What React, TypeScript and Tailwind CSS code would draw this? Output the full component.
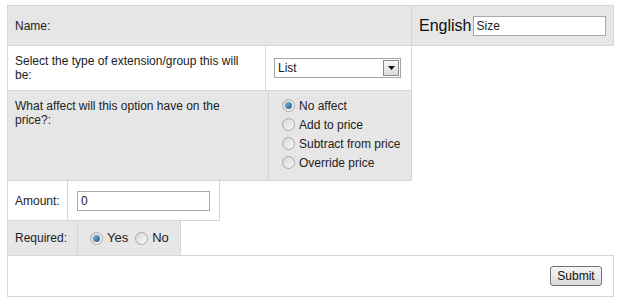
import React from 'react';

const font = { fontFamily: '"Liberation Sans", Arial, sans-serif' };

function Radio({ checked }: { checked?: boolean }) {
  return (
    <span className="relative inline-flex items-center justify-center w-[13px] h-[13px] rounded-full border border-[#a8a8a8] bg-gradient-to-br from-[#d6d6d6] to-[#fafafa] shrink-0">
      {checked ? (
        <span className="w-[7px] h-[7px] rounded-full bg-gradient-to-br from-[#7bb8dc] to-[#1d5e8c]" />
      ) : null}
    </span>
  );
}

function RadioRow({ label, checked }: { label: string; checked?: boolean }) {
  return (
    <label className="flex items-center gap-[4px] h-[19px]">
      <Radio checked={checked} />
      <span>{label}</span>
    </label>
  );
}

export default function App() {
  const cell = 'border-[#d6d6d6]';
  return (
    <div className="w-[619px] h-[305px] bg-white pl-[7px] pt-[5px] text-[12px] text-[#222]" style={font}>
      {/* Name row */}
      <div className="flex">
        <div className={`w-[405px] h-[41px] border ${cell} bg-[#e6e6e6] pl-[7px] flex items-center`}>Name:</div>
        <div className={`w-[202px] h-[41px] border-y border-r ${cell} bg-[#e6e6e6] pl-[7px] flex items-center gap-[2px]`}>
          <span className="text-[16px] text-[#111]">English</span>
          <input
            readOnly
            value="Size"
            className="w-[133px] h-[20px] border border-[#a9a9a9] bg-white px-[2px] text-[12px] outline-none"
            style={font}
          />
        </div>
      </div>

      {/* Type row */}
      <div className="flex">
        <div className={`w-[259px] h-[45px] border-l border-r border-b ${cell} pl-[7px] pr-[16px] pt-[8px] leading-[14px]`}>
          Select the type of extension/group this will be:
        </div>
        <div className={`w-[146px] h-[45px] border-r border-b ${cell} pl-[8px] pt-[12px]`}>
          <div className="w-[127px] h-[20px] border border-[#a5a5a5] bg-white flex items-center justify-between pl-[3px] pr-[1px]">
            <span>List</span>
            <span className="w-[16px] h-[16px] border border-[#8a8a8a] bg-gradient-to-b from-[#f7f7f7] to-[#dcdcdc] flex items-center justify-center">
              <svg width="7" height="4" viewBox="0 0 7 4">
                <path d="M0 0h7L3.5 4z" fill="#111" />
              </svg>
            </span>
          </div>
        </div>
      </div>

      {/* Price row */}
      <div className="flex">
        <div className={`w-[262px] h-[90px] border-l border-r border-b ${cell} bg-[#e6e6e6] pl-[7px] pr-[20px] pt-[8px] leading-[14px]`}>
          What affect will this option have on the price?:
        </div>
        <div className={`w-[143px] h-[90px] border-r border-b ${cell} bg-[#e6e6e6] pl-[13px] pt-[5px] flex flex-col`}>
          <RadioRow label="No affect" checked />
          <RadioRow label="Add to price" />
          <RadioRow label="Subtract from price" />
          <RadioRow label="Override price" />
        </div>
      </div>

      {/* Amount row */}
      <div className="flex">
        <div className={`w-[61px] h-[40px] border-l border-r border-b ${cell} pl-[7px] flex items-center`}>Amount:</div>
        <div className={`w-[152px] h-[40px] border-r border-b ${cell} pl-[9px] pt-[10px]`}>
          <input
            readOnly
            value="0"
            className="w-[133px] h-[20px] border border-[#a9a9a9] bg-white px-[3px] text-[12px] outline-none"
            style={font}
          />
        </div>
      </div>

      {/* Required row */}
      <div className="flex">
        <div className={`w-[71px] h-[34px] border-l border-r ${cell} bg-[#e6e6e6] pl-[7px] flex items-center`}>Required:</div>
        <div className={`w-[103px] h-[34px] border-r ${cell} bg-[#e6e6e6] pl-[12px] flex items-center gap-[4px] text-[13px]`}>
          <Radio checked />
          <span className="mr-[3px]">Yes</span>
          <Radio />
          <span>No</span>
        </div>
      </div>

      {/* Submit row */}
      <div className={`w-[607px] h-[42px] border ${cell} flex items-center justify-end pr-[11px]`}>
        <button
          type="button"
          className="w-[52px] h-[20px] border border-[#707070] rounded-[3px] bg-gradient-to-b from-[#f6f6f6] to-[#dadada] text-[12px] text-[#111]"
          style={font}
        >
          Submit
        </button>
      </div>
    </div>
  );
}
